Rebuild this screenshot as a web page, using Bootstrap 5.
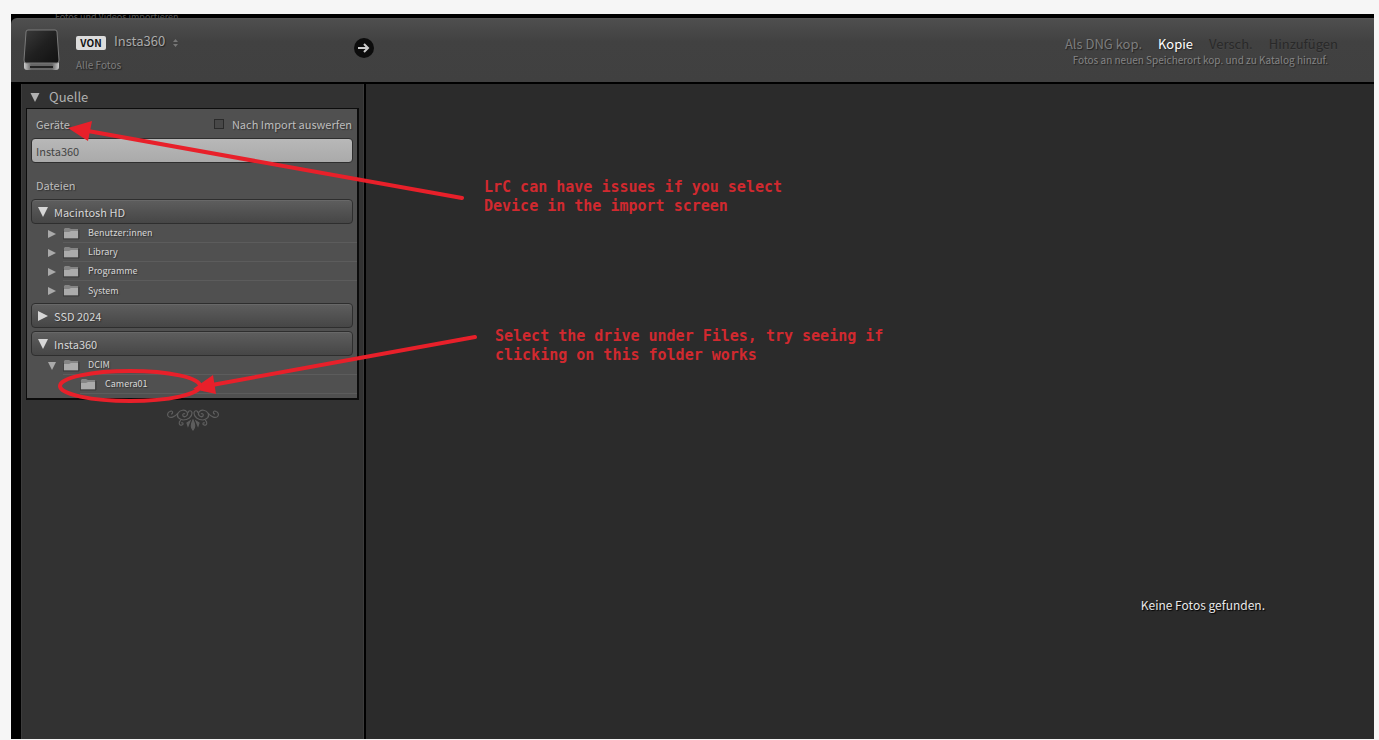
<!DOCTYPE html>
<html lang="de">
<head>
<meta charset="utf-8">
<meta name="viewport" content="width=device-width, initial-scale=1">
<title>Fotos und Videos importieren</title>
<link href="https://cdn.jsdelivr.net/npm/bootstrap@5.3.0/dist/css/bootstrap.min.css" rel="stylesheet">
<style>
  body { background: #f6f6f6; font-family: "Noto Sans CJK SC", "Noto Sans", sans-serif; font-size: 11px; line-height: 18px; color: #bdbdbd; }
  .shell { height: 100vh; padding: 14px 5px 1px 11px; }
  .app-window { background: #000; }
  .plain { font: inherit; color: inherit; background: none; border: 0; padding: 0; text-align: left; text-shadow: inherit; }

  .title-strip { height: 6px; margin-bottom: -2px; padding-left: 44px; font-size: 9px; line-height: 6px; color: #555; z-index: 1; }
  .top-bar { height: 64px; margin-bottom: 2px; padding: 0 36px 0 12px; background: linear-gradient(#5a5a5a 0, #4e4e4e 2px, #414141 24px, #404040 100%); border-top-left-radius: 6px; text-shadow: 1px 1px 1px #222; }
  .source-block { width: 277px; margin-left: 15px; padding-top: 14px; gap: 6px; }
  .von { width: 30px; height: 14px; background: #dcdcdc; color: #111; border-radius: 2px; font-size: 10px; line-height: 13px; font-weight: 700; text-align: center; text-shadow: none; margin-top: 3px; }
  .source-name { font-size: 13px; color: #aaa; }
  .source-filter { font-size: 10px; color: #7d7d7d; }
  .mode-block { padding-top: 17px; }
  .mode { font-size: 13px; color: #7d7d7d; }
  .mode.active { color: #fff; }
  .mode:disabled { color: #292929; text-shadow: 0 1px 0 #484848; }
  .mode-note { font-size: 10px; line-height: 14px; color: #858585; padding-right: 10px; text-align: right; }

  .side { width: 345px; margin-left: 10px; padding: 0 5px; background: #323232; border-right: 2px solid #000; box-shadow: inset 1px 0 #3c3c3c, inset -1px 0 #3c3c3c; }
  .section-head { height: 24px; padding: 2px 0 0 4px; gap: 9px; font-size: 13px; color: #b0b0b0; }
  .files-panel { padding: 0 0 4px 4px; background: #505050; border: 1px solid #0c0c0c; border-right-width: 2px; border-bottom-width: 2px; text-shadow: 1px 1px 1px #333; }
  .caption-row { height: 29px; padding: 0 5px; }
  .caption-row.files { margin-top: 7px; }
  .tick { appearance: none; width: 10px; height: 10px; border: 1px solid #2a2a2a; background: #484848; }
  .bar { width: calc(100% - 4px); height: 25px; border: 1px solid #2e2e2e; border-radius: 4px; padding: 0 4px; }
  .bar.chosen { background: linear-gradient(#b8b8b8, #aaa); color: #454545; text-shadow: none; }
  .bar.volume { background: linear-gradient(#5e5e5e, #464646); color: #d6d6d6; gap: 6px; padding: 0 6px; box-shadow: inset 0 1px #686868; }
  .volume + .volume, .tree + .volume { margin-top: 3px; }
  .tree { margin: 0; padding: 0 0 0 17px; list-style: none; font-size: 9px; color: #d6d6d6; }
  .tree li { height: 19px; }
  .tree .toggle { width: 15px; color: #aaa; }
  .tree .folder { gap: 8px; border-bottom: 1px solid #5c5c5c; }
  .tree .nested { padding-left: 32px; }

  .stage { background: #2b2b2b; }
  .empty-note { position: absolute; right: 109px; bottom: 125px; font-size: 12px; color: #e8e8e8; text-shadow: 1px 1px 1px #000; }
  .marks { position: absolute; left: 0; top: 0; pointer-events: none; z-index: 2; }
  .note { position: absolute; margin: 0; font: bold 15px/19px "DejaVu Sans Mono", monospace; color: #d1292f; white-space: pre; }
  .note-device { left: 118px; top: 94px; }
  .note-drive { left: 129px; top: 243px; }
</style>
</head>
<body>
<svg class="d-none">
  <symbol id="down" viewBox="0 0 10 10"><path d="M0 0H10L5 10Z" fill="currentColor"/></symbol>
  <symbol id="right" viewBox="0 0 10 10"><path d="M0 0L10 5L0 10Z" fill="currentColor"/></symbol>
  <symbol id="folder" viewBox="0 0 17 13"><path d="M1 4V2L2 1H6L8 2H15V12H1Z" fill="#858585"/><path d="M1 5H6L8 4H15V11H1Z" fill="#ababab"/><path d="M0 4V12H16V3" fill="none" stroke="#3a3a3a"/></symbol>
</svg>
<div class="shell">
  <div class="app-window position-relative d-flex flex-column h-100 overflow-hidden">
    <div class="title-strip overflow-hidden flex-shrink-0">Fotos und Videos importieren</div>
    <header class="top-bar d-flex flex-shrink-0">
      <svg width="38" height="44" viewBox="0 0 38 44" class="mt-2 flex-shrink-0" aria-hidden="true">
        <defs>
          <linearGradient id="base" x2="1"><stop stop-color="#ccc"/><stop offset=".2" stop-color="#666"/><stop offset=".8" stop-color="#666"/><stop offset="1" stop-color="#ccc"/></linearGradient>
          <linearGradient id="lid" x2="1" y2="1"><stop stop-color="#3a3a3a"/><stop offset=".5" stop-color="#202020"/><stop offset="1" stop-color="#111"/></linearGradient>
        </defs>
        <path d="M1 36H36V41Q36 44 33 44H4Q1 44 1 41Z" fill="url(#base)"/><path d="M7 40H30V42H7Z" fill="#222"/>
        <path d="M5 4H32Q34 4 34 6L36 34Q36 37 34 37H3Q1 37 1 34L3 6Q3 4 5 4Z" fill="url(#lid)" stroke="#7a7a7a"/>
      </svg>
      <div class="source-block d-flex flex-column">
        <button class="plain d-flex align-items-center"><span class="von">VON</span><span class="source-name ms-2">Insta360</span><svg class="ms-2 mt-1" width="5" height="8" viewBox="0 0 5 8"><path d="M0 3L2.500 0L5 3ZM0 5L2.500 8L5 5Z" fill="#777"/></svg></button>
        <span class="source-filter">Alle Fotos</span>
      </div>
      <button class="plain mb-1" aria-label="Weiter"><svg width="22" height="22" viewBox="0 0 22 22"><circle cx="11" cy="11" r="10" fill="#0c0c0c"/><path d="M5 11H15M11 7L15 11L11 15" fill="none" stroke="#ccc" stroke-width="2"/></svg></button>
      <div class="mode-block ms-auto">
        <div class="d-flex gap-3"><button class="plain mode">Als DNG kop.</button><button class="plain mode active">Kopie</button><button class="plain mode" disabled>Versch.</button><button class="plain mode" disabled>Hinzufügen</button></div>
        <div class="mode-note">Fotos an neuen Speicherort kop. und zu Katalog hinzuf.</div>
      </div>
    </header>
    <div class="d-flex flex-grow-1">
      <aside class="side flex-shrink-0">
        <button class="plain section-head d-flex align-items-center"><svg width="10" height="9"><use href="#down"/></svg>Quelle</button>
        <div class="files-panel">
          <div class="caption-row d-flex align-items-center justify-content-between">
            <span>Geräte</span>
            <span class="d-flex align-items-center gap-2"><input class="tick m-0" type="checkbox" id="eject"><label for="eject">Nach Import auswerfen</label></span>
          </div>
          <button class="plain bar chosen d-flex align-items-center">Insta360</button>
          <div class="caption-row files d-flex align-items-center">Dateien</div>
          <button class="plain bar volume d-flex align-items-center"><svg width="10" height="10"><use href="#down"/></svg>Macintosh HD</button>
          <ul class="tree">
            <li class="d-flex"><button class="plain toggle d-flex align-items-center" aria-label="Benutzer:innen öffnen"><svg width="8" height="8"><use href="#right"/></svg></button><button class="plain folder d-flex align-items-center flex-grow-1"><svg width="17" height="13"><use href="#folder"/></svg>Benutzer:innen</button></li>
            <li class="d-flex"><button class="plain toggle d-flex align-items-center" aria-label="Library öffnen"><svg width="8" height="8"><use href="#right"/></svg></button><button class="plain folder d-flex align-items-center flex-grow-1"><svg width="17" height="13"><use href="#folder"/></svg>Library</button></li>
            <li class="d-flex"><button class="plain toggle d-flex align-items-center" aria-label="Programme öffnen"><svg width="8" height="8"><use href="#right"/></svg></button><button class="plain folder d-flex align-items-center flex-grow-1"><svg width="17" height="13"><use href="#folder"/></svg>Programme</button></li>
            <li class="d-flex"><button class="plain toggle d-flex align-items-center" aria-label="System öffnen"><svg width="8" height="8"><use href="#right"/></svg></button><button class="plain folder d-flex align-items-center flex-grow-1 border-0"><svg width="17" height="13"><use href="#folder"/></svg>System</button></li>
          </ul>
          <button class="plain bar volume d-flex align-items-center"><svg width="10" height="10"><use href="#right"/></svg>SSD 2024</button>
          <button class="plain bar volume d-flex align-items-center"><svg width="10" height="10"><use href="#down"/></svg>Insta360</button>
          <ul class="tree">
            <li class="d-flex"><button class="plain toggle d-flex align-items-center" aria-label="DCIM schließen"><svg width="8" height="8"><use href="#down"/></svg></button><button class="plain folder d-flex align-items-center flex-grow-1"><svg width="17" height="13"><use href="#folder"/></svg>DCIM</button></li>
            <li class="nested d-flex"><button class="plain folder d-flex align-items-center flex-grow-1"><svg width="17" height="13"><use href="#folder"/></svg>Camera01</button></li>
          </ul>
        </div>
        <svg class="d-block mx-auto mt-2" width="54" height="24" viewBox="0 0 54 24" fill="none" stroke="#5e5e5e" stroke-width="1.200" aria-hidden="true">
          <g id="scroll">
            <path d="M5 6A1.500 1.500 0 1 0 4 3.500C2 4 1 6 2 8C4 11 9 9 12 5C14 2 19 1 21 4C23 7 19 10 17 8C16 6 18 5 19 6"/>
            <path d="M12 5C10 9 13 11 17 12C22 12 26 9 26 5C26 2 22 2 22 5"/>
            <path d="M15 12C12 14 13 18 16 17C18 16 17 14 15 15"/>
            <path d="M21 15L24 13L22 18Z" fill="#5e5e5e"/>
          </g>
          <use href="#scroll" transform="matrix(-1 0 0 1 54 0)"/>
          <path d="M27 12C29 16 29 20 27 22C25 20 25 16 27 12Z" fill="#5e5e5e"/>
        </svg>
      </aside>
      <main class="stage flex-grow-1 position-relative">
        <p class="note note-device">LrC can have issues if you select
Device in the import screen</p>
        <p class="note note-drive">Select the drive under Files, try seeing if
clicking on this folder works</p>
        <p class="empty-note m-0">Keine Fotos gefunden.</p>
      </main>
    </div>
    <svg class="marks" width="480" height="400" viewBox="11 14 480 400" fill="none" stroke="#e8202a" stroke-width="4" stroke-linecap="round" aria-hidden="true">
      <path d="M88 131L462 198M212 385L475 337"/>
      <path d="M68 128L92 121L88 141ZM193 389L213 375L216 394Z" fill="#e8202a" stroke="none"/>
      <ellipse cx="130" cy="386" rx="70" ry="15"/>
    </svg>
  </div>
</div>
<script src="https://cdn.jsdelivr.net/npm/bootstrap@5.3.0/dist/js/bootstrap.bundle.min.js"></script>
</body>
</html>
